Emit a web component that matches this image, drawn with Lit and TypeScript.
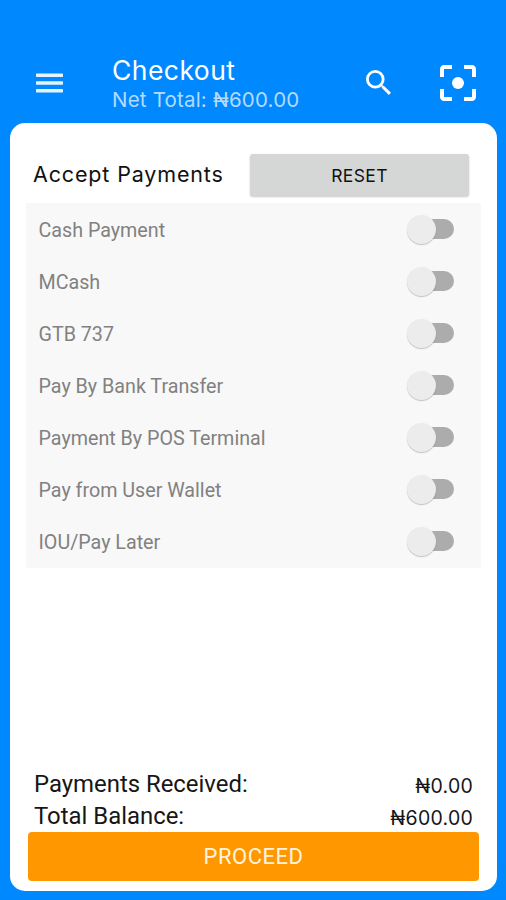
import { LitElement, html, css, svg } from "lit";
import { customElement, property } from "lit/decorators.js";

@customElement("toggle-switch")
class ToggleSwitch extends LitElement {
  static styles = css`
    :host { display: block; width: 47px; height: 32px; position: relative; }
    .track { position: absolute; left: 10px; right: 0; top: 5px; height: 20px; border-radius: 10px; background: #acacac; }
    .thumb { position: absolute; left: 0; top: 0.5px; width: 29px; height: 29px; border-radius: 50%; background: #ececec; box-shadow: 0 1px 1px rgba(0, 0, 0, 0.22); }
  `;
  render() {
    return html`<div class="track"></div><div class="thumb"></div>`;
  }
}

@customElement("payment-row")
class PaymentRow extends LitElement {
  @property() label = "";
  static styles = css`
    :host { display: flex; box-sizing: border-box; align-items: center; justify-content: space-between; height: 52px; padding: 0 27px 0 12.5px; color: #818181; font-size: 19.7px; }
    .label { white-space: nowrap; }
  `;
  render() {
    return html`<span class="label">${this.label}</span><toggle-switch></toggle-switch>`;
  }
}

const methods = ["Cash Payment", "MCash", "GTB 737", "Pay By Bank Transfer", "Payment By POS Terminal", "Pay from User Wallet", "IOU/Pay Later"];

@customElement("app-root")
class AppRoot extends LitElement {
  static styles = css`
    * { box-sizing: border-box; }
    :host { box-sizing: border-box; display: flex; flex-direction: column; width: 506px; height: 900px; background: #0088ff; font-family: Roboto, sans-serif; overflow: hidden; padding: 0 9px 9px 10px; white-space: nowrap; }
    .bar { height: 123px; flex: none; display: flex; padding-top: 52px; color: #fff; }
    .menu { width: 27px; height: 20px; margin: 21px 0 0 26px; flex: none; }
    .titles { margin-left: 49px; width: 254px; flex: none; font-family: Inter, sans-serif; }
    .title { font-size: 26.5px; line-height: 37px; letter-spacing: 0.45px; }
    .sub { font-size: 20.5px; line-height: 22px; letter-spacing: 0.2px; color: #b3dbff; }
    .search { width: 25px; height: 25px; margin: 18px 0 0; flex: none; }
    .scan { width: 36px; height: 36px; margin: 13px 0 0 48.5px; flex: none; }
    .card { flex: 1; background: #fff; border-radius: 15px; display: flex; flex-direction: column; padding: 31px 16px 10px 16px; }
    .head { display: flex; justify-content: space-between; align-items: center; height: 42px; padding: 0 12px 0 7px; }
    .heading { font-family: Inter, sans-serif; font-size: 21.5px; letter-spacing: 0.85px; color: #111; padding-bottom: 2px; }
    .reset { width: 219px; height: 42px; border: 0; border-radius: 3px; background: #d5d7d6; box-shadow: 0 1px 2px rgba(0, 0, 0, 0.22); font: 17.5px Inter, sans-serif; letter-spacing: 0.35px; color: #111; padding: 0; }
    .list { margin-top: 7px; padding-top: 1px; background: #f8f8f8; }
    .totals { margin-top: auto; padding: 0 8px 0 8px; color: #161616; }
    .line { display: flex; justify-content: space-between; align-items: center; height: 32px; font-size: 23.9px; }
    .amount { font-family: Inter, sans-serif; font-size: 19.5px; letter-spacing: 0.25px; padding-top: 3px; }
    .proceed { height: 49px; margin: 0 2px 0 2px; border: 0; border-radius: 4px; background: #ff9800; color: #fff3df; font: 22px Roboto, sans-serif; letter-spacing: 0.5px; flex: none; padding: 0; }
  `;

  render() {
    return html`
      <header class="bar">
        <svg class="menu" viewBox="0 0 27 20" fill="#e6f3ff">
          ${[0.5, 8.3, 16].map((y) => svg`<rect x="0" y=${y} width="27" height="3.4" rx=".4"></rect>`)}
        </svg>
        <div class="titles">
          <div class="title">Checkout</div>
          <div class="sub">Net Total: ₦600.00</div>
        </div>
        <svg class="search" viewBox="3 3 17.5 17.5" fill="#fff">
          <path d="M15.5 14h-.79l-.28-.27A6.471 6.471 0 0 0 16 9.5 6.5 6.5 0 1 0 9.5 16c1.61 0 3.09-.59 4.23-1.57l.27.28v.79l5 4.99L20.49 19l-4.99-5zm-6 0C7.01 14 5 11.99 5 9.5S7.01 5 9.5 5 14 7.01 14 9.5 11.99 14 9.5 14z"></path>
        </svg>
        <svg class="scan" viewBox="3 3 18 18" fill="#fff">
          <path d="M5 15H3v4c0 1.1.9 2 2 2h4v-2H5v-4zM5 5h4V3H5c-1.100 0-2 .9-2 2v4h2V5zm14-2h-4v2h4v4h2V5c0-1.100-.9-2-2-2zm0 16h-4v2h4c1.100 0 2-.9 2-2v-4h-2v4z"></path>
          <circle cx="12" cy="12" r="3"></circle>
        </svg>
      </header>
      <main class="card">
        <div class="head">
          <div class="heading">Accept Payments</div>
          <button class="reset">RESET</button>
        </div>
        <div class="list">${methods.map((m) => html`<payment-row .label=${m}></payment-row>`)}</div>
        <div class="totals">
          <div class="line"><span>Payments Received:</span><span class="amount">₦0.00</span></div>
          <div class="line"><span>Total Balance:</span><span class="amount">₦600.00</span></div>
        </div>
        <button class="proceed">PROCEED</button>
      </main>
    `;
  }
}
